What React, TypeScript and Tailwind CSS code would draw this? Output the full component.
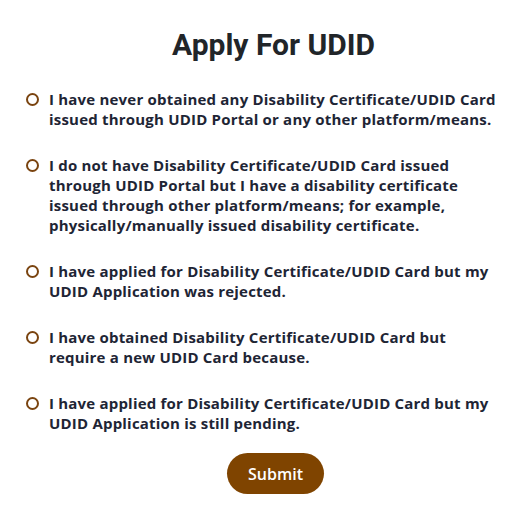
const options = [
  'I have never obtained any Disability Certificate/UDID Card issued through UDID Portal or any other platform/means.',
  'I do not have Disability Certificate/UDID Card issued through UDID Portal but I have a disability certificate issued through other platform/means; for example, physically/manually issued disability certificate.',
  'I have applied for Disability Certificate/UDID Card but my UDID Application was rejected.',
  'I have obtained Disability Certificate/UDID Card but require a new UDID Card because.',
  'I have applied for Disability Certificate/UDID Card but my UDID Application is still pending.',
]

export default function App() {
  return (
    <div className="min-h-screen bg-white">
      <div className="flex flex-col items-center pt-[27px]">
        <h1 className="pl-[18px] font-['Roboto',sans-serif] text-[30px] font-bold leading-[36px] text-[#212529]">
          Apply For UDID
        </h1>

        <div className="mt-[26px] flex w-full flex-col gap-[26px] pl-[26px] pr-[27px]">
          {options.map((text) => (
            <label key={text} className="flex items-start gap-[10px]">
              <span className="mt-[4px] h-[13px] w-[13px] shrink-0 rounded-full border-2 border-[#7a4410]" />
              <span className="font-['Open_Sans',sans-serif] text-[15px] font-bold leading-[20px] tracking-[0.2px] text-[#1e2535]">
                {text}
              </span>
            </label>
          ))}
        </div>

        <div className="mt-[20px] pl-[22px]">
          <button className="h-[41px] w-[97px] rounded-full bg-[#7f4400] font-['Open_Sans',sans-serif] text-[16px] font-semibold text-white">
            Submit
          </button>
        </div>
      </div>
    </div>
  )
}
